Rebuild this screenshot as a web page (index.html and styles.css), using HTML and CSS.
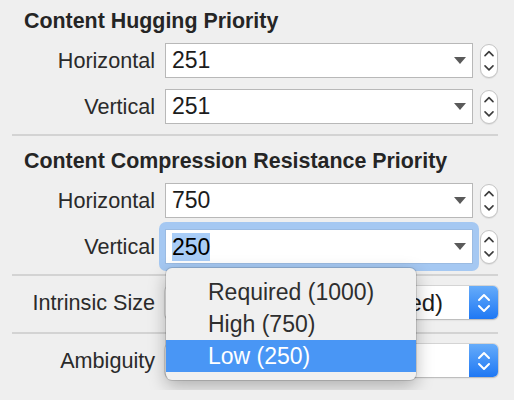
FILE: index.html
```html
<!DOCTYPE html>
<html lang="en">
<head>
  <meta charset="UTF-8" />
  <meta name="viewport" content="width=device-width, initial-scale=1.0"/>
  <title>Size Inspector</title>
  <link rel="stylesheet" href="styles.css">
</head>
<body>
  <div class="panel">

    <section class="group">
      <h2 class="group-title">Content Hugging Priority</h2>
      <div class="row">
        <span class="row-label">Horizontal</span>
        <div class="combo">
          <span class="combo-value">251</span>
          <span class="combo-arrow"></span>
        </div>
        <svg class="stepper" width="18" height="34" viewBox="0 0 18 34">
          <path d="M4.5 11 L9 6.5 L13.5 11 M4.5 22.5 L9 27 L13.5 22.5" />
        </svg>
      </div>
      <div class="row">
        <span class="row-label">Vertical</span>
        <div class="combo">
          <span class="combo-value">251</span>
          <span class="combo-arrow"></span>
        </div>
        <svg class="stepper" width="18" height="34" viewBox="0 0 18 34">
          <path d="M4.5 11 L9 6.5 L13.5 11 M4.5 22.5 L9 27 L13.5 22.5" />
        </svg>
      </div>
    </section>

    <section class="group">
      <h2 class="group-title">Content Compression Resistance Priority</h2>
      <div class="row">
        <span class="row-label">Horizontal</span>
        <div class="combo">
          <span class="combo-value">750</span>
          <span class="combo-arrow"></span>
        </div>
        <svg class="stepper" width="18" height="34" viewBox="0 0 18 34">
          <path d="M4.5 11 L9 6.5 L13.5 11 M4.5 22.5 L9 27 L13.5 22.5" />
        </svg>
      </div>
      <div class="row">
        <span class="row-label">Vertical</span>
        <div class="combo is-focused">
          <span class="combo-value"><span class="selection">250</span></span>
          <span class="combo-arrow"></span>
        </div>
        <svg class="stepper" width="18" height="34" viewBox="0 0 18 34">
          <path d="M4.5 11 L9 6.5 L13.5 11 M4.5 22.5 L9 27 L13.5 22.5" />
        </svg>
      </div>
    </section>

    <section class="group group-plain">
      <div class="row row-popup">
        <span class="row-label">Intrinsic Size</span>
        <div class="popup">
          <span class="popup-value">Default (System Defined)</span>
          <span class="popup-arrows">
            <svg width="14" height="22" viewBox="0 0 14 22">
              <path d="M2 8 L7 3 L12 8 M2 14 L7 19 L12 14" />
            </svg>
          </span>
        </div>
      </div>
    </section>

    <section class="group group-plain">
      <div class="row row-popup">
        <span class="row-label">Ambiguity</span>
        <div class="popup">
          <span class="popup-value">Never Verify</span>
          <span class="popup-arrows">
            <svg width="14" height="22" viewBox="0 0 14 22">
              <path d="M2 8 L7 3 L12 8 M2 14 L7 19 L12 14" />
            </svg>
          </span>
        </div>
      </div>
    </section>

    <!-- open menu of the focused combo box -->
    <ul class="menu">
      <li class="menu-item">Required (1000)</li>
      <li class="menu-item">High (750)</li>
      <li class="menu-item is-highlighted">Low (250)</li>
    </ul>

  </div>
</body>
</html>
```

FILE: styles.css
```css
* {
  box-sizing: border-box;
}

body {
  margin: 0;
  background: #efefef;
  font-family: "Liberation Sans", Arial, sans-serif;
  color: #262626;
}

.panel {
  position: relative;
  margin: 0 16px 0 12px;
}

.group {
  padding: 12px 0 10px;
}

.group:first-child {
  padding-top: 8px;
}

.group + .group {
  border-top: 2px solid #d3d3d3;
}

.group-plain {
  padding: 10px 0 13px;
}

.group-title {
  margin: 0 0 9px 12px;
  font-size: 21.4px;
  line-height: 26px;
  font-weight: bold;
  color: #252525;
}

.row {
  display: flex;
  align-items: center;
  height: 35px;
}

.row + .row {
  margin-top: 11px;
}

.row-popup {
  height: 33px;
}

.row-label {
  flex: none;
  width: 143px;
  margin-right: 10px;
  text-align: right;
  font-size: 21.6px;
  color: #2a2a2a;
  white-space: nowrap;
}

.combo {
  flex: 1;
  height: 35px;
  display: flex;
  align-items: center;
  padding: 0 6px;
  background: #fff;
  border: 1px solid #b8b8b8;
  font-size: 23px;
  color: #1c1c1c;
}

.combo-value {
  flex: 1;
}

.combo-arrow {
  width: 0;
  height: 0;
  border-left: 6.5px solid transparent;
  border-right: 6.5px solid transparent;
  border-top: 7px solid #5a5a5a;
}

.combo.is-focused {
  position: relative;
  border-color: #9bbbe2;
}

.combo.is-focused::before {
  content: "";
  position: absolute;
  top: -8px;
  bottom: -8px;
  left: -7px;
  right: -7px;
  border-radius: 7px;
  background: #a5c8f2;
  z-index: -1;
}

.selection {
  display: inline-block;
  height: 28px;
  line-height: 28px;
  background: #a9cdf7;
  color: #000;
}

.stepper {
  flex: none;
  margin-left: 7px;
  background: #fff;
  border: 1px solid #c4c4c4;
  border-radius: 9px;
  box-shadow: 0 1px 1px rgba(0, 0, 0, 0.08);
}

.stepper path {
  fill: none;
  stroke: #3c3c3c;
  stroke-width: 1.8;
  stroke-linecap: round;
  stroke-linejoin: round;
}

.popup {
  flex: 1;
  height: 33px;
  display: flex;
  align-items: center;
  background: #fff;
  border-radius: 5px;
  box-shadow: 0 0 0 1px rgba(0, 0, 0, 0.1), 0 1px 2px rgba(0, 0, 0, 0.15);
  font-size: 24px;
  color: #1c1c1c;
}

.popup-value {
  flex: 1;
  padding-left: 10px;
  white-space: nowrap;
  overflow: hidden;
}

.popup-arrows {
  flex: none;
  width: 29px;
  align-self: stretch;
  display: flex;
  align-items: center;
  justify-content: center;
  background: linear-gradient(#66acfa, #1f78f4);
  border-radius: 0 5px 5px 0;
}

.popup-arrows path {
  fill: none;
  stroke: #fff;
  stroke-width: 2;
  stroke-linecap: round;
  stroke-linejoin: round;
}

.menu {
  position: absolute;
  top: 268px;
  left: 154px;
  width: 250px;
  margin: 0;
  padding: 8px 0;
  list-style: none;
  background: #f0f0f0;
  border-radius: 6px;
  box-shadow: 0 0 0 1px rgba(0, 0, 0, 0.13), 0 6px 18px rgba(0, 0, 0, 0.28);
}

.menu-item {
  height: 32px;
  line-height: 32px;
  padding-left: 42px;
  font-size: 23px;
  color: #2e2e2e;
  white-space: nowrap;
}

.menu-item.is-highlighted {
  background: #4996f5;
  color: #fff;
}
```
